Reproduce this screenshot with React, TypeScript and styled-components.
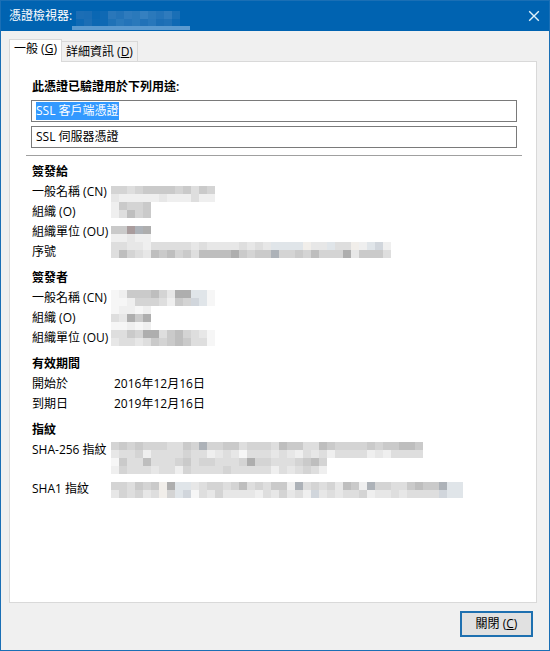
import React from "react";
import styled, { createGlobalStyle, css } from "styled-components";

const GlobalStyle = createGlobalStyle`
  * { box-sizing: border-box; }
  body {
    margin: 0;
    background: #f0f0f0;
    color: #000;
    font: 12px/20px "Open Sans", "Noto Sans CJK TC", sans-serif;
  }
  button, input { font: inherit; color: inherit; }
`;

const Dialog = styled.main`
  display: flex;
  flex-direction: column;
  min-height: 100vh;
  border: 1px solid #1a6fb5;
  background: #f0f0f0;
`;

const TitleBar = styled.header`
  display: flex;
  align-items: center;
  height: 30px;
  padding: 0 9px 0 8px;
  background: #0063b1;
  color: #fff;
`;

const Title = styled.h1`
  margin: 0;
  font-size: 12px;
  font-weight: 400;
  white-space: nowrap;
`;

const TitleMosaic = styled.svg`
  display: block;
  flex: none;
  align-self: flex-end;
`;

const CloseIconButton = styled.button`
  display: flex;
  margin-left: auto;
  padding: 0;
  border: 0;
  background: none;
`;

const Tabs = styled.div`
  display: flex;
  align-items: flex-end;
  height: 30px;
  padding: 0 8px;
`;

const Tab = styled.button<{ $active?: boolean }>`
  height: 20px;
  padding: 0 4px;
  border: 1px solid #d9d9d9;
  border-width: 1px 1px 0 0;
  background: #f0f0f0;
  line-height: 18px;
  white-space: nowrap;
  ${(p) =>
    p.$active &&
    css`
      z-index: 1;
      height: 23px;
      margin-bottom: -1px;
      padding-bottom: 4px;
      border-left-width: 1px;
      background: #fff;
    `}
`;

const Panel = styled.section`
  flex: 1;
  margin: 0 12px 0 8px;
  padding: 16px 14px;
  border: 1px solid #d9d9d9;
  background: #fff;
`;

const Usages = styled.div`
  display: flex;
  flex-direction: column;
  gap: 4px;
  padding: 0 5px 7px;
  border-bottom: 1px solid #a0a0a0;
  margin-left: 2px;
`;

const Heading = styled.h2`
  margin: 0;
  padding-left: 1px;
  font-size: 12px;
  font-weight: 600;
  line-height: 18px;
`;

const Field = styled.div`
  display: flex;
  align-items: center;
  height: 22px;
  padding: 0 4px;
  border: 1px solid #7a7a7a;
`;

const FieldInput = styled.input<{ $selected?: boolean }>`
  field-sizing: content;
  height: 18px;
  padding: 0;
  border: 0;
  outline: 0;
  background: ${(p) => (p.$selected ? "#3399ff" : "transparent")};
  color: ${(p) => (p.$selected ? "#fff" : "#000")};
`;

const Group = styled.section`
  display: grid;
  grid-template-columns: 80px 1fr;
  margin: 6px 0 0 7px;
`;

const GroupHeading = styled(Heading)`
  grid-column: 1 / -1;
  line-height: 20px;
`;

const Labels = styled.div<{ $loose?: boolean }>`
  display: flex;
  flex-direction: column;
  gap: ${(p) => (p.$loose ? "19px" : "0")};
  padding-left: 1px;
  white-space: nowrap;
`;

const Mosaic = styled.svg<{ $drop: number }>`
  display: block;
  margin-top: ${(p) => p.$drop}px;
`;

const Dates = styled.dl`
  grid-column: 1 / -1;
  display: grid;
  grid-template-columns: 82px 1fr;
  margin: 0;
  padding-left: 1px;
`;

const DateValue = styled.dd`
  margin: 0;
`;

const Footer = styled.footer`
  display: flex;
  justify-content: flex-end;
  padding: 8px 16px 13px;
`;

const ActionButton = styled.button`
  width: 73px;
  height: 26px;
  padding: 0;
  border: 2px solid #1e70b0;
  background: #e1e1e1;
`;

const CELL = 8;

const TONES: Record<string, string> = {
  a: "#f6f6f6",
  b: "#efefef",
  c: "#e7e7e7",
  d: "#dedede",
  e: "#d4d4d4",
  f: "#cacaca",
  g: "#bebebe",
  h: "#aeaeae",
  i: "#a0a0a0",
  B: "#e0e5e9",
  C: "#d1d6dc",
  H: "#adb2b8",
  R: "#a99c9d",
  Y: "#f1eeea",
};

const SUBJECT = [
  "eedeffffefdfe",
  "cbbbbbcbbbdbb",
  "bfeef",
  "bdgef",
  "",
  "ffRHh",
  "bbcbb",
  "ddccbdddddcdccccdcdcBBBBYccBddYbBCb",
  "dgedcgfgefdgggghfeffHeefegeeehcfffd",
];

const ISSUER = [
  "abfffgechhBBa",
  "aabeeedbfeCBa",
  "abbab",
  "dchfh",
  "aabab",
  "ddfehhdfgedca",
  "cddcdfefgfdda",
];

const PRINTS = [
  "efefeeeddfeHeeffdeeedgffddgfeeeefeffggf",
  "cddebddddeddbcdcadddcdcbdcdbddddbcbdddd",
  "afddgdddefdeedddeheedddefge",
  "bedddcddbeddddedddddbdcdedb",
  "",
  "eedfefYhBBcdeedegdedffbHdedecgfbHeeddfgffHBB",
  "cedecdYeBCadceccccbdcecdbCcdcddebccdcddddCBB",
];

function Redaction({ rows, drop, label }: { rows: string[]; drop: number; label: string }) {
  const width = Math.max(...rows.map((r) => r.length)) * CELL;
  const height = rows.length * CELL;
  return (
    <Mosaic
      $drop={drop}
      width={width}
      height={height}
      role="img"
      aria-label={label}
      shapeRendering="crispEdges"
    >
      {rows.flatMap((row, y) =>
        [...row].map((tone, x) => (
          <rect
            key={`${x}-${y}`}
            x={x * CELL}
            y={y * CELL}
            width={CELL}
            height={CELL}
            fill={TONES[tone]}
          />
        ))
      )}
    </Mosaic>
  );
}

const TITLE_TOP = ["#1c6eb5", "#1a6db5", "#0a67b3", "#0f69b4", "#2a77ba", "#2373b8", "#2f7bbd", "#2a79bb", "#3580c0", "#2b79bb", "#2474b9", "#2f7bbd", "#1a6fb6"];
const TITLE_LOW = ["#0f69b4", "#1c6eb5", "#0d68b3", "#0f69b4", "#1f72b7", "#2a79bb", "#2474b9", "#2a79bb", "#2172b8", "#2877bb", "#1c6eb5", "#2071b7", "#0f69b4"];

export default function App() {
  return (
    <>
      <GlobalStyle />
      <Dialog>
        <TitleBar>
          <Title>憑證檢視器:</Title>
          <TitleMosaic width="118" height="22" shapeRendering="crispEdges" aria-hidden="true">
            {TITLE_TOP.map((c, i) => (
              <rect key={c + i} x={i * 8 + 4} y="2" width="8" height="8" fill={c} />
            ))}
            {TITLE_LOW.map((c, i) => (
              <rect key={c + i} x={i * 8 + 4} y="10" width="8" height="7" fill={c} />
            ))}
            <rect x="0" y="17" width="118" height="4" fill="#5b9ad0" />
          </TitleMosaic>
          <CloseIconButton type="button" aria-label="關閉視窗">
            <svg width="12" height="12" viewBox="0 0 12 12" fill="none" stroke="#dff1fa" strokeWidth="1.4">
              <path d="M1.2 1.2l9.6 9.6M10.8 1.2l-9.6 9.6" />
            </svg>
          </CloseIconButton>
        </TitleBar>

        <Tabs role="tablist">
          <Tab type="button" role="tab" aria-selected="true" $active>
            一般 (<u>G</u>)
          </Tab>
          <Tab type="button" role="tab" aria-selected="false">
            詳細資訊 (<u>D</u>)
          </Tab>
        </Tabs>

        <Panel role="tabpanel">
          <Usages>
            <Heading id="usages">此憑證已驗證用於下列用途:</Heading>
            <Field>
              <FieldInput $selected readOnly aria-labelledby="usages" defaultValue="SSL 客戶端憑證" />
            </Field>
            <Field>
              <FieldInput readOnly aria-labelledby="usages" defaultValue="SSL 伺服器憑證" />
            </Field>
          </Usages>

          <Group>
            <GroupHeading>簽發給</GroupHeading>
            <Labels>
              <span>一般名稱 (CN)</span>
              <span>組織 (O)</span>
              <span>組織單位 (OU)</span>
              <span>序號</span>
            </Labels>
            <Redaction rows={SUBJECT} drop={4} label="簽發給" />
          </Group>

          <Group>
            <GroupHeading>簽發者</GroupHeading>
            <Labels>
              <span>一般名稱 (CN)</span>
              <span>組織 (O)</span>
              <span>組織單位 (OU)</span>
            </Labels>
            <Redaction rows={ISSUER} drop={2} label="簽發者" />
          </Group>

          <Group>
            <GroupHeading>有效期間</GroupHeading>
            <Dates>
              <dt>開始於</dt>
              <DateValue>2016年12月16日</DateValue>
              <dt>到期日</dt>
              <DateValue>2019年12月16日</DateValue>
            </Dates>
          </Group>

          <Group>
            <GroupHeading>指紋</GroupHeading>
            <Labels $loose>
              <span>SHA-256 指紋</span>
              <span>SHA1 指紋</span>
            </Labels>
            <Redaction rows={PRINTS} drop={2} label="指紋" />
          </Group>
        </Panel>

        <Footer>
          <ActionButton type="button">
            關閉 (<u>C</u>)
          </ActionButton>
        </Footer>
      </Dialog>
    </>
  );
}
